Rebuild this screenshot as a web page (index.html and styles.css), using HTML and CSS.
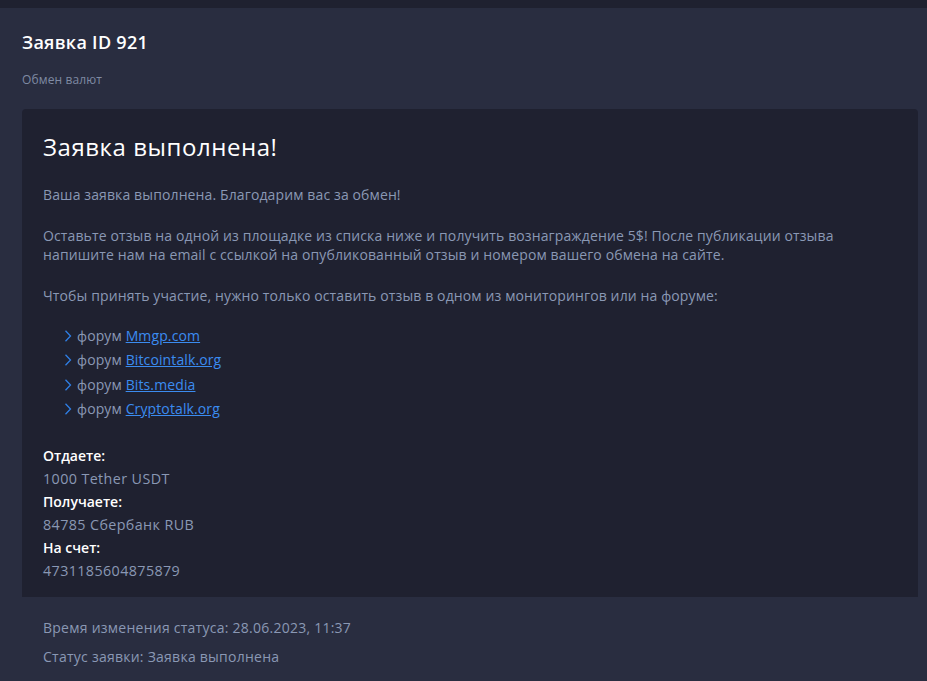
FILE: index.html
```html
<!DOCTYPE html>
<html lang="ru">
<head>
<meta charset="utf-8">
<title>Заявка ID 921</title>
<link rel="stylesheet" href="styles.css">
</head>
<body>
<div class="topbar"></div>
<main class="page">
  <h1 class="page-title">Заявка ID 921</h1>
  <div class="breadcrumb">Обмен валют</div>
  <section class="card">
    <h2 class="card-title">Заявка выполнена!</h2>
    <p class="text">Ваша заявка выполнена. Благодарим вас за обмен!</p>
    <p class="text">Оставьте отзыв на одной из площадке из списка ниже и получить вознаграждение 5$! После публикации отзыва напишите нам на email с ссылкой на опубликованный отзыв и номером вашего обмена на сайте.</p>
    <p class="text text-lead">Чтобы принять участие, нужно только оставить отзыв в одном из мониторингов или на форуме:</p>
    <ul class="forums">
      <li><svg class="chev" viewBox="0 0 8 12" width="8" height="12"><path d="M1.5 0.8 L6.5 6 L1.5 11.2" fill="none" stroke="#2f7fe6" stroke-width="1.3"/></svg>форум <a href="#">Mmgp.com</a></li>
      <li><svg class="chev" viewBox="0 0 8 12" width="8" height="12"><path d="M1.5 0.8 L6.5 6 L1.5 11.2" fill="none" stroke="#2f7fe6" stroke-width="1.3"/></svg>форум <a href="#">Bitcointalk.org</a></li>
      <li><svg class="chev" viewBox="0 0 8 12" width="8" height="12"><path d="M1.5 0.8 L6.5 6 L1.5 11.2" fill="none" stroke="#2f7fe6" stroke-width="1.3"/></svg>форум <a href="#">Bits.media</a></li>
      <li><svg class="chev" viewBox="0 0 8 12" width="8" height="12"><path d="M1.5 0.8 L6.5 6 L1.5 11.2" fill="none" stroke="#2f7fe6" stroke-width="1.3"/></svg>форум <a href="#">Cryptotalk.org</a></li>
    </ul>
    <dl class="details">
      <dt>Отдаете:</dt>
      <dd>1000 Tether USDT</dd>
      <dt>Получаете:</dt>
      <dd>84785 Сбербанк RUB</dd>
      <dt>На счет:</dt>
      <dd>4731185604875879</dd>
    </dl>
  </section>
  <div class="status">
    <p class="status-line">Время изменения статуса: 28.06.2023, 11:37</p>
    <p class="status-line">Статус заявки: Заявка выполнена</p>
  </div>
</main>
</body>
</html>
```
FILE: styles.css
```css
* { box-sizing: border-box; }
html, body { margin: 0; padding: 0; }
body {
  background: #292d40;
  font-family: "Open Sans", "Noto Sans", sans-serif;
  color: #8a98b4;
  letter-spacing: 0.12px;
  height: 681px;
  overflow: hidden;
}
.topbar {
  height: 8px;
  background: #1f2130;
}
.page {
  padding: 0 9px 0 22px;
}
.page-title {
  margin: 0;
  padding-top: 22px;
  font-size: 18px;
  line-height: 24px;
  font-weight: 600;
  letter-spacing: 0.3px;
  color: #ffffff;
}
.breadcrumb {
  margin-top: 18px;
  font-size: 12px;
  line-height: 16px;
  color: #7f8aa3;
}
.card {
  margin-top: 21px;
  background: #1f2130;
  border-radius: 4px 4px 0 0;
  padding: 20px 21px 15px;
}
.card-title {
  margin: 0 0 20px;
  font-size: 24px;
  line-height: 36px;
  font-weight: 500;
  letter-spacing: 0.55px;
  color: #ffffff;
}
.text {
  margin: 0 0 22px;
  font-size: 14px;
  line-height: 19px;
}
.text-lead {
  margin-bottom: 19px;
}
.forums {
  list-style: none;
  margin: 0 0 22px;
  padding: 0 0 0 21px;
  font-size: 14px;
  line-height: 24.4px;
}
.chev {
  display: inline-block;
  vertical-align: -1px;
  margin-right: 5px;
}
.forums a {
  color: #3b8cf0;
  text-decoration: underline;
}
.details {
  margin: 0;
  font-size: 14px;
  line-height: 23px;
}
.details dt {
  color: #ffffff;
  font-weight: 600;
  letter-spacing: 0;
}
.details dd {
  margin: 0;
  font-size: 14.3px;
  letter-spacing: 0.4px;
}
.status {
  padding: 21px 21px 0;
}
.status-line {
  margin: 0 0 10px;
  font-size: 14px;
  line-height: 19px;
  letter-spacing: 0.25px;
}
```
